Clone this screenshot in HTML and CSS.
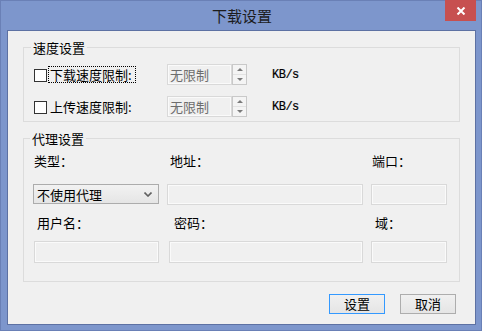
FILE: index.html
```html
<!DOCTYPE html>
<html lang="zh-CN">
<head>
    <meta charset="UTF-8">
    <title>下载设置</title>
    <link rel="stylesheet" href="styles.css">
</head>
<body>
    <div class="window">
        <div class="titlebar">
            <span class="title">下载设置</span>
            <div class="close">
                <svg width="10" height="8" viewBox="0 0 10 8">
                    <path d="M1.5 0.5 L8.5 7.5 M8.5 0.5 L1.5 7.5" stroke="#fff" stroke-width="2" fill="none"/>
                </svg>
            </div>
        </div>

        <div class="client">
            <!-- Speed group -->
            <fieldset class="group speed-group">
                <legend>速度设置</legend>

                <div class="speed-row">
                    <div class="check-wrap">
                        <span class="check"></span>
                        <span class="check-label focused">下载速度限制:</span>
                    </div>
                    <div class="spin">
                        <div class="spin-field">无限制</div>
                        <div class="spin-btns">
                            <span class="spin-btn"><i class="arrow-up"></i></span>
                            <span class="spin-btn"><i class="arrow-down"></i></span>
                        </div>
                    </div>
                    <span class="unit">KB/s</span>
                </div>

                <div class="speed-row second">
                    <div class="check-wrap">
                        <span class="check"></span>
                        <span class="check-label">上传速度限制:</span>
                    </div>
                    <div class="spin">
                        <div class="spin-field">无限制</div>
                        <div class="spin-btns">
                            <span class="spin-btn"><i class="arrow-up"></i></span>
                            <span class="spin-btn"><i class="arrow-down"></i></span>
                        </div>
                    </div>
                    <span class="unit">KB/s</span>
                </div>
            </fieldset>

            <!-- Proxy group -->
            <fieldset class="group proxy-group">
                <legend>代理设置</legend>

                <div class="proxy-grid">
                    <span class="field-label l-type">类型：</span>
                    <span class="field-label l-addr">地址：</span>
                    <span class="field-label l-port">端口：</span>

                    <div class="select row1">
                        <span>不使用代理</span>
                        <svg width="8" height="5" viewBox="0 0 8 5">
                            <path d="M0.5 0.5 L4 4 L7.5 0.5" stroke="#606060" stroke-width="1.6" fill="none"/>
                        </svg>
                    </div>
                    <div class="input row1"></div>
                    <div class="input row1"></div>

                    <span class="field-label row2-label l-user">用户名：</span>
                    <span class="field-label row2-label l-pass">密码：</span>
                    <span class="field-label row2-label l-domain">域：</span>

                    <div class="input row2 i-user"></div>
                    <div class="input row2 i-pass"></div>
                    <div class="input row2"></div>
                </div>
            </fieldset>

            <div class="buttons">
                <button class="btn default">设置</button>
                <button class="btn">取消</button>
            </div>
        </div>
    </div>
</body>
</html>
```

FILE: styles.css
```css
:root {
    --frame-color: #7d96cc;
    --frame-border: #6a80b6;
    --client-border: #5d71a3;
    --client-bg: #f0f0f0;
    --group-border: #dcdcdc;
    --input-border: #d9d9d9;
    --text-color: #000000;
    --disabled-text: #6d6d6d;
    --close-bg: #c75050;
}

body {
    margin: 0;
    padding: 0;
    background-color: #ffffff;
    font-family: "Noto Sans CJK SC", "Noto Sans", sans-serif;
    font-size: 13px;
    color: var(--text-color);
}

.window {
    position: relative;
    width: 482px;
    height: 331px;
    box-sizing: border-box;
    border: 1px solid var(--frame-border);
    background-color: var(--frame-color);
    padding: 0 5px 5px 6px;
    display: flex;
    flex-direction: column;
}

.titlebar {
    height: 29px;
    display: flex;
    justify-content: center;
    align-items: center;
}

.title {
    font-size: 15px;
    line-height: 29px;
    color: #1c1c1c;
    margin-left: 1px;
}

.close {
    position: absolute;
    top: -1px;
    right: 5px;
    width: 31px;
    height: 21px;
    background-color: var(--close-bg);
    display: flex;
    justify-content: center;
    align-items: center;
}

.client {
    flex: 1;
    border: 1px solid var(--client-border);
    background-color: var(--client-bg);
    padding: 9px 15px 0 15px;
    display: flex;
    flex-direction: column;
}

/* Group boxes */
.group {
    margin: 0;
    border: 1px solid var(--group-border);
    min-width: 0;
}

.group legend {
    padding: 0 2px;
    margin-left: -3px;
    line-height: 15px;
    font-size: 13px;
}

.speed-group {
    padding: 9px 9px 4px 10px;
}

.proxy-group {
    margin-top: 9px;
    padding: 7px 9px 18px 9px;
}

/* Speed rows */
.speed-row {
    display: flex;
    align-items: center;
    height: 21px;
}

.speed-row.second {
    margin-top: 11px;
}

.check-wrap {
    width: 133px;
    display: flex;
    align-items: center;
}

.check {
    width: 11px;
    height: 11px;
    border: 1px solid #333333;
    background-color: #ffffff;
    margin-top: 1px;
}

.check-label {
    margin-left: 2px;
    padding: 0 3px 0 1px;
    line-height: 15px;
}

.check-label.focused {
    outline: 1px dotted #000000;
}

.spin {
    display: flex;
    width: 80px;
    height: 21px;
}

.spin-field {
    flex: 1;
    border: 1px solid var(--input-border);
    box-shadow: inset 0 0 0 1px #fafafa;
    color: var(--disabled-text);
    padding-left: 2px;
    line-height: 19px;
}

.spin-btns {
    width: 13px;
    border: 1px solid #c9c9c9;
    display: flex;
    flex-direction: column;
}

.spin-btn {
    flex: 1;
    display: flex;
    justify-content: center;
    align-items: center;
    background-color: #f4f4f4;
}

.spin-btn + .spin-btn {
    border-top: 1px solid #e2e2e2;
}

.arrow-up,
.arrow-down {
    width: 0;
    height: 0;
    border-left: 3px solid transparent;
    border-right: 3px solid transparent;
}

.arrow-up {
    border-bottom: 3px solid #7a7a7a;
}

.arrow-down {
    border-top: 3px solid #7a7a7a;
}

.unit {
    margin-left: 25px;
    font-family: "Liberation Mono", monospace;
    font-size: 12px;
    letter-spacing: -0.5px;
    -webkit-text-stroke: 0.2px #000;
}

/* Proxy grid */
.proxy-grid {
    display: grid;
    grid-template-columns: 126px 196px 76px;
    column-gap: 8px;
    align-items: start;
}

.field-label {
    line-height: 15px;
    height: 15px;
}

.l-type { padding-left: 1px; }
.l-addr { padding-left: 3px; }
.l-port { padding-left: 1px; }
.l-user { padding-left: 4px; }
.l-pass { padding-left: 7px; }
.l-domain { padding-left: 4px; }

.row1 {
    margin-top: 16px;
    height: 21px;
}

.row2-label {
    margin-top: 10px;
}

.row2 {
    margin-top: 11px;
    height: 22px;
}

.select {
    height: 20px;
    box-sizing: border-box;
    border: 1px solid #acacac;
    background: linear-gradient(#f2f2f2, #e5e5e5);
    display: flex;
    align-items: center;
    justify-content: space-between;
    padding: 0 6px 0 3px;
}

.input {
    box-sizing: border-box;
    border: 1px solid var(--input-border);
    box-shadow: inset 0 0 0 1px #fafafa;
    background-color: var(--client-bg);
}

.i-user {
    margin-left: 1px;
}

.i-pass {
    margin-left: 2px;
}

/* Buttons */
.buttons {
    display: flex;
    justify-content: flex-end;
    gap: 15px;
    margin-top: 12px;
    padding-right: 4px;
}

.btn {
    width: 56px;
    height: 20px;
    padding: 0;
    border: 1px solid #adadad;
    background: linear-gradient(#f0f0f0, #e5e5e5);
    font-family: "Noto Sans CJK SC", "Noto Sans", sans-serif;
    font-size: 13px;
    line-height: 18px;
    color: #000000;
}

.btn.default {
    border-color: #3399ff;
}
```
